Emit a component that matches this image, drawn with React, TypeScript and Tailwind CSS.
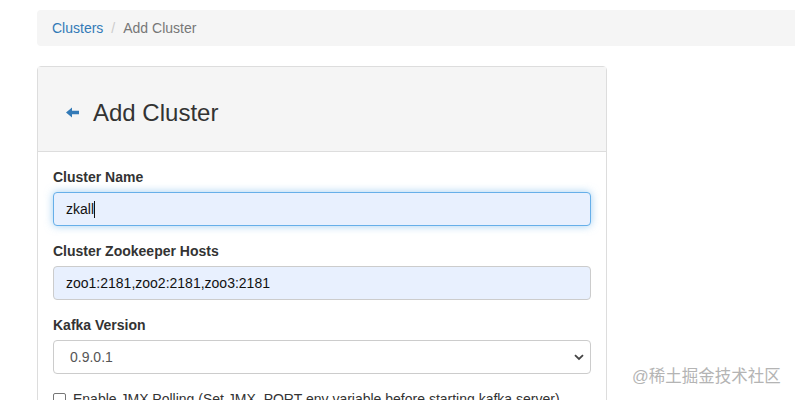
import React from 'react';

const font = { fontFamily: '"Liberation Sans", Arial, "Noto Sans CJK SC", sans-serif' };

function ArrowLeft() {
  return (
    <svg width="13" height="11" viewBox="0 0 13 11" className="text-[#337ab7]">
      <path d="M0 5.5 L6 0.5 L6 3.8 L13 3.8 L13 7.2 L6 7.2 L6 10.5 Z" fill="currentColor" />
    </svg>
  );
}

function Chevron() {
  return (
    <svg width="10" height="7" viewBox="0 0 10 7">
      <path d="M1 1.2 L5 5 L9 1.2" stroke="#444" strokeWidth="1.8" fill="none" />
    </svg>
  );
}

export default function App() {
  return (
    <div className="relative w-[795px] h-[400px] overflow-hidden bg-white text-[14px] text-[#333]" style={font}>
      {/* Breadcrumb */}
      <div className="mt-[10px] ml-[37px] w-[800px] h-[36px] bg-[#f5f5f5] rounded-[4px] px-[15px] flex items-center">
        <span className="text-[#337ab7]">Clusters</span>
        <span className="text-[#ccc] px-[8px]">/</span>
        <span className="text-[#777]">Add Cluster</span>
      </div>

      {/* Panel */}
      <div className="mt-[20px] ml-[37px] w-[570px] border border-[#ddd] rounded-t-[4px]">
        <div className="h-[85px] bg-[#f5f5f5] border-b border-[#ddd] flex items-center pl-[28px] pt-[7px]">
          <ArrowLeft />
          <span className="ml-[14px] text-[24px] leading-none text-[#333]">Add Cluster</span>
        </div>

        <div className="p-[15px]">
          <div className="mb-[15px]">
            <div className="font-bold leading-[20px] mb-[5px]">Cluster Name</div>
            <div className="h-[34px] rounded-[4px] border border-[#66afe9] bg-[#e8f0fe] shadow-[0_0_8px_rgba(102,175,233,0.6)] px-[12px] flex items-center text-[#111]">
              zkall<span className="inline-block w-px h-[17px] bg-[#111]" />
            </div>
          </div>

          <div className="mb-[15px]">
            <div className="font-bold leading-[20px] mb-[5px]">Cluster Zookeeper Hosts</div>
            <div className="h-[34px] rounded-[4px] border border-[#ccc] bg-[#e8f0fe] px-[12px] flex items-center text-[#111]">
              zoo1:2181,zoo2:2181,zoo3:2181
            </div>
          </div>

          <div className="mb-[15px]">
            <div className="font-bold leading-[20px] mb-[5px]">Kafka Version</div>
            <div className="h-[34px] rounded-[4px] border border-[#ccc] bg-white pl-[16px] pr-[6px] flex items-center justify-between text-[#555]">
              <span>0.9.0.1</span>
              <Chevron />
            </div>
          </div>

          <div className="flex items-center gap-[7px]">
            <span className="w-[13px] h-[13px] border border-[#767676] rounded-[2px] bg-white" />
            <span>Enable JMX Polling (Set JMX_PORT env variable before starting kafka server)</span>
          </div>
        </div>
      </div>

      {/* Watermark */}
      <div className="absolute left-[632px] top-[365px] text-[16.5px] text-[#b4b4b4] leading-[22px]">@稀土掘金技术社区</div>
    </div>
  );
}
